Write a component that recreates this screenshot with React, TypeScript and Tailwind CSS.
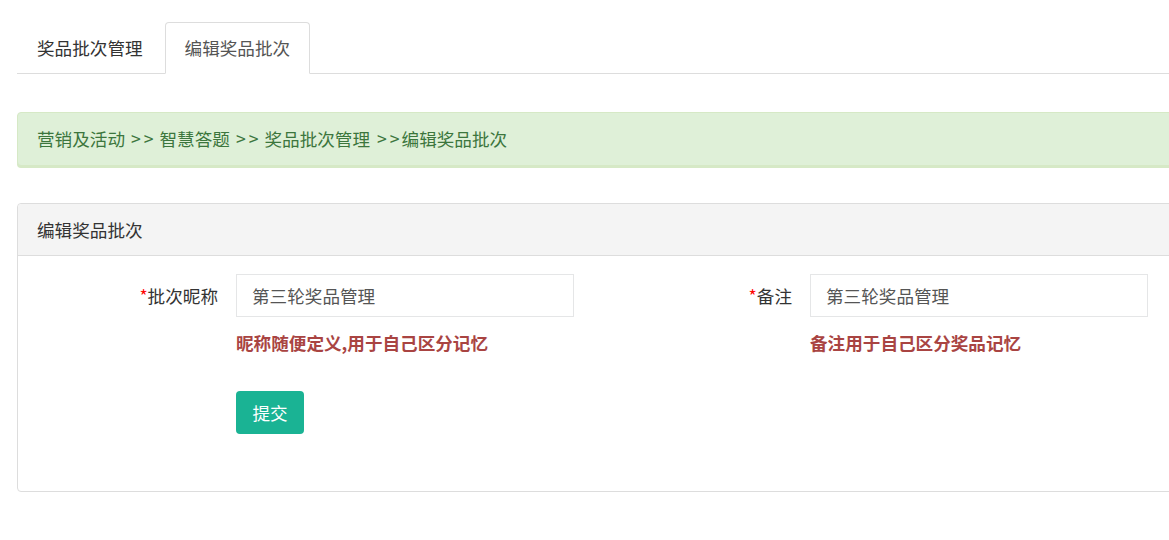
import React from "react";

const font = { fontFamily: '"Noto Sans CJK SC", "Liberation Sans", sans-serif' };

function Sep({ after = true }: { after?: boolean }) {
  return (
    <span className={after ? "ml-[6px] mr-[6px]" : "ml-[7px] mr-[2px]"}>
      &gt;<span className="ml-[3px]">&gt;</span>
    </span>
  );
}

export default function App() {
  return (
    <div className="w-full min-h-[540px] overflow-hidden bg-white" style={font}>
      <div className="w-[1200px] pl-[17px] pt-[22px] text-[17.6px] leading-[24px] text-[#333]">
        {/* Tabs */}
        <div className="flex border-b border-[#dddddd] h-[52px]">
          <div className="h-[51px] px-[20px] flex items-center mr-[2px] text-[#333]">奖品批次管理</div>
          <div className="h-[52px] -mb-px px-[19px] flex items-center border border-[#dddddd] border-b-white rounded-t-[4px] bg-white text-[#555]">编辑奖品批次</div>
        </div>

        {/* Breadcrumb alert */}
        <div className="mt-[38px] h-[54px] flex items-center pl-[19px] bg-[#dff0d8] border border-[#d6e9c6] rounded-l-[4px] text-[#3c763d] shadow-[0_2px_0_#d6e9c6] whitespace-pre">
          <span>营销及活动</span>
          <Sep />
          <span>智慧答题</span>
          <Sep />
          <span>奖品批次管理</span>
          <Sep after={false} />
          <span>编辑奖品批次</span>
        </div>

        {/* Panel */}
        <div className="mt-[37px] border border-[#dddddd] rounded-l-[4px] h-[289px]">
          <div className="h-[52px] flex items-center pl-[19px] bg-[#f4f4f4] border-b border-[#dddddd] rounded-tl-[4px] text-[#333]">
            编辑奖品批次
          </div>
          <div className="pt-[18px] flex">
            <div className="w-[574px] flex">
              <div className="w-[218px] pr-[18px] h-[43px] flex items-center justify-end">
                <span className="text-[#ff0000]">*</span>批次昵称
              </div>
              <div className="flex flex-col">
                <div className="w-[338px] h-[43px] border border-[#e5e6e7] flex items-center pl-[15px] text-[#555]">第三轮奖品管理</div>
                <div className="mt-[14px] font-bold text-[#a94442]">昵称随便定义,用于自己区分记忆</div>
                <button className="mt-[36px] w-[68px] h-[43px] rounded-[4px] bg-[#1ab394] text-white flex items-center justify-center">提交</button>
              </div>
            </div>
            <div className="w-[574px] flex">
              <div className="w-[218px] pr-[18px] h-[43px] flex items-center justify-end">
                <span className="text-[#ff0000]">*</span>备注
              </div>
              <div className="flex flex-col">
                <div className="w-[338px] h-[43px] border border-[#e5e6e7] flex items-center pl-[15px] text-[#555]">第三轮奖品管理</div>
                <div className="mt-[14px] font-bold text-[#a94442]">备注用于自己区分奖品记忆</div>
              </div>
            </div>
          </div>
        </div>
      </div>
    </div>
  );
}
